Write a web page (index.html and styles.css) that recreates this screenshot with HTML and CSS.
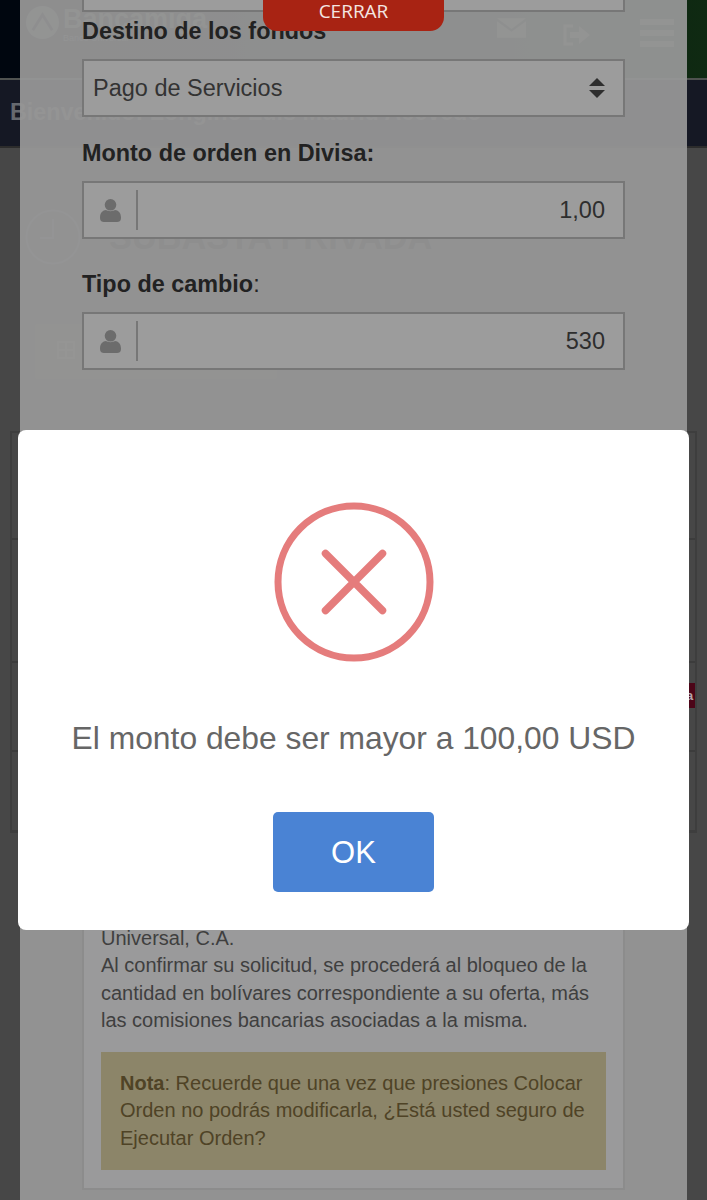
FILE: index.html
```html
<!DOCTYPE html>
<html lang="es">
<head>
<meta charset="utf-8">
<title>Subasta Privada</title>
<link rel="stylesheet" href="styles.css">
</head>
<body>
<div class="screen">
  <div class="page">
    <header class="topbar">
      <div class="brand">
        <svg class="brand-mark" viewBox="0 0 36 36"><circle cx="18" cy="18" r="17" fill="currentColor"/><path d="M8 26 L18 10 L28 26" fill="none" stroke="#0a0f18" stroke-width="3"/></svg>
        <div class="brand-text">
          <span class="brand-name">Bancamiga</span>
          <span class="brand-sub">Banco Universal</span>
        </div>
      </div>
      <div class="top-icons">
        <svg class="ti-mail" viewBox="0 0 30 20"><path d="M0 0H30L15 11Z M0 3V20H30V3L15 14Z" fill="currentColor"/></svg>
        <svg class="ti-exit" viewBox="0 0 28 22"><path d="M11 2H3V20H11" fill="none" stroke="currentColor" stroke-width="3"/><path d="M8 8H17V2L28 11L17 20V14H8Z" fill="currentColor"/></svg>
        <div class="ti-menu"><i></i><i></i><i></i></div>
      </div>
    </header>
    <div class="greet">Bienvenido: Longino Luis Madrid Acevedo</div>
    <main class="content">
      <div class="title-row">
        <svg class="clock" viewBox="0 0 56 56"><circle cx="28" cy="28" r="26.5" fill="none" stroke="currentColor" stroke-width="2"/><path d="M28 10V29H15" fill="none" stroke="currentColor" stroke-width="2"/></svg>
        <h1 class="title">SUBASTA PRIVADA</h1>
      </div>
      <div class="ghost-btn"><svg class="ghost-ico" viewBox="0 0 18 18"><path d="M1 1H17V17H1Z M1 9H17 M9 1V17" fill="none" stroke="currentColor" stroke-width="2"/></svg></div>
      <div class="table">
        <div class="row row-a"></div>
        <div class="row row-b"></div>
        <div class="row row-c"><span class="badge">a</span></div>
        <div class="row row-d"></div>
      </div>
    </main>
  </div>

  <section class="panel">
    <div class="box box-first"></div>
    <div class="label label-first">Destino de los fondos</div>
    <div class="box select">
      <span>Pago de Servicios</span>
      <svg class="updown" viewBox="0 0 16 20"><path d="M8 0L16 8H0Z M8 20L0 12H16Z" fill="currentColor"/></svg>
    </div>
    <div class="label label-second">Monto de orden en Divisa:</div>
    <div class="box field">
      <span class="addon"><svg class="person" viewBox="0 0 21 23"><circle cx="10.5" cy="5.8" r="5.8" fill="currentColor"/><path d="M0 19C0 13 3 11.5 6 11C8 12.5 13 12.5 15 11C18 11.5 21 13 21 19C21 22 19 23 17 23H4C2 23 0 22 0 19Z" fill="currentColor"/></svg></span>
      <span class="value">1,00</span>
    </div>
    <div class="label label-third"><b>Tipo de cambio</b>:</div>
    <div class="box field">
      <span class="addon"><svg class="person" viewBox="0 0 21 23"><circle cx="10.5" cy="5.8" r="5.8" fill="currentColor"/><path d="M0 19C0 13 3 11.5 6 11C8 12.5 13 12.5 15 11C18 11.5 21 13 21 19C21 22 19 23 17 23H4C2 23 0 22 0 19Z" fill="currentColor"/></svg></span>
      <span class="value">530</span>
    </div>
    <div class="terms">
      <p class="terms-text">Universal, C.A.<br>Al confirmar su solicitud, se procederá al bloqueo de la cantidad en bolívares correspondiente a su oferta, más las comisiones bancarias asociadas a la misma.</p>
      <p class="note"><b>Nota</b>: Recuerde que una vez que presiones Colocar Orden no podrás modificarla, ¿Está usted seguro de Ejecutar Orden?</p>
    </div>
  </section>

  <button class="close-tab">CERRAR</button>

  <div class="alert-layer">
    <div class="alert">
      <svg class="alert-icon" viewBox="0 0 160 160"><circle cx="80" cy="80" r="76" fill="none" stroke="#e57c7c" stroke-width="7"/><path d="M51.5 51.5L108.500 108.500M108.500 51.500L51.500 108.500" fill="none" stroke="#e57c7c" stroke-width="7.500" stroke-linecap="round"/></svg>
      <p class="alert-text">El monto debe ser mayor a 100,00 USD</p>
      <button class="ok">OK</button>
    </div>
  </div>
</div>
</body>
</html>
```
FILE: styles.css
```css
* { box-sizing: border-box; }
html, body { margin: 0; padding: 0; }
body { font-family: "Liberation Sans", Arial, sans-serif; }

.screen {
  position: relative;
  width: 707px;
  height: 1200px;
  overflow: hidden;
  background: #474747;
}

/* Page behind the dialogs */
.page { display: flex; flex-direction: column; height: 100%; }
.topbar {
  height: 80px;
  display: flex;
  align-items: flex-start;
  justify-content: space-between;
  padding: 5px 33px 0 25px;
  background: linear-gradient(90deg, #00060f 0%, #00060f 10%, #0f2a12 100%);
  border-bottom: 2px solid #4f5250;
  color: #5c625f;
}
.brand { display: flex; gap: 3px; }
.brand-mark { width: 35px; height: 35px; }
.brand-text { display: flex; flex-direction: column; }
.brand-name { font-size: 27px; line-height: 28px; font-weight: 700; }
.brand-sub { font-size: 9px; line-height: 10px; }
.top-icons { display: flex; align-items: flex-start; }
.ti-mail { width: 29px; height: 20px; margin-top: 13px; }
.ti-exit { width: 28px; height: 22px; margin: 19px 0 0 36px; }
.ti-menu { display: flex; flex-direction: column; gap: 5px; width: 34px; margin: 14px 0 0 50px; }
.ti-menu i { display: block; height: 6px; background: currentColor; }

.greet {
  height: 68px;
  padding: 0 10px;
  background: #151824;
  border-bottom: 2px solid #2c2c2c;
  color: #66696f;
  font-size: 23.300px;
  font-weight: 700;
  line-height: 64px;
  white-space: nowrap;
}
.content { flex: 1; padding: 60px 10px 0; }
.title-row { display: flex; align-items: center; gap: 28px; padding-left: 15px; height: 58px; }
.clock { width: 56px; height: 56px; color: #626870; }
.title { margin: 0; font-size: 34.300px; font-weight: 700; color: #000; padding-top: 0; }
.ghost-btn {
  width: 242px;
  height: 55px;
  margin: 58px 0 0 25px;
  padding: 17px 22px;
  border-radius: 3px;
  background: #5f5e4f;
  color: #7a7866;
}
.ghost-ico { display: block; width: 18px; height: 18px; }
.table { margin-top: 52px; border: 2px solid #3e3e3e; border-bottom-width: 3px; height: 402px; }
.row { border-bottom: 2px solid #3c3c3c; }
.row-a { height: 107px; }
.row-b { height: 123px; }
.row-c { height: 89px; padding-top: 20px; display: flex; justify-content: flex-end; }
.row-d { height: 80px; border-bottom: 0; }
.badge {
  width: 9px;
  height: 25px;
  background: #4c0518;
  color: #b5a5a8;
  font-size: 13px;
  font-weight: 700;
  line-height: 25px;
  overflow: hidden;
}

/* Form dialog */
.panel {
  position: absolute;
  top: 0;
  left: 20px;
  width: 667px;
  height: 1200px;
  padding: 0 62px;
  background: rgba(151, 151, 151, 0.94);
  color: #2a2a2a;
}
.box {
  width: 543px;
  height: 58px;
  border: 2px solid #777;
  background: #9c9c9c;
}
.box-first { margin-top: -46px; }
.label { font-size: 23.400px; line-height: 26px; font-weight: 700; color: #222; margin-bottom: 15px; }
.label b { font-weight: 700; }
.label-first { margin-top: 6px; }
.label-second { margin-top: 23px; }
.label-third { margin-top: 32px; font-weight: 400; }
.select {
  display: flex;
  align-items: center;
  justify-content: space-between;
  padding: 0 18px 0 9px;
  font-size: 23.500px;
  color: #333;
}
.updown { width: 16px; height: 20px; color: #2e2e2e; }
.field { display: flex; align-items: center; justify-content: space-between; padding-right: 18px; }
.addon {
  display: flex;
  align-items: center;
  width: 54px;
  height: 40px;
  padding-left: 16px;
  border-right: 2px solid #777;
  color: #6c6c6c;
}
.person { width: 21px; height: 23px; }
.value { font-size: 23.500px; color: #2e2e2e; }

.terms {
  margin-top: 535px;
  width: 543px;
  height: 285px;
  padding: 20px 17px 17px;
  border: 2px solid #8c8c8c;
  border-top: 0;
  background: #9a9a9b;
  color: #3f3f3f;
  font-size: 20px;
  line-height: 27.300px;
}
.terms-text { margin: 0 0 18px; }
.note {
  margin: 0;
  padding: 18px 10px 18px 19px;
  background: #8c8569;
  color: #4f4326;
}

/* Close tab */
.close-tab {
  position: absolute;
  top: 0;
  left: 263px;
  width: 181px;
  height: 31px;
  padding: 0 0 9px;
  border: 0;
  border-radius: 0 0 14px 14px;
  background: #a82313;
  color: #f4e6e2;
  font-family: "Open Sans", sans-serif;
  font-size: 19px;
  line-height: 22px;
}

/* Alert */
.alert-layer {
  position: absolute;
  inset: 0;
  display: flex;
  justify-content: center;
  align-items: flex-start;
  padding-top: 430px;
}
.alert {
  width: 671px;
  height: 500px;
  padding-top: 72px;
  display: flex;
  flex-direction: column;
  align-items: center;
  border-radius: 8px;
  background: #fff;
}
.alert-icon { width: 160px; height: 160px; }
.alert-text {
  margin: 55px 0 0;
  font-size: 31.800px;
  line-height: 42px;
  color: #666;
  white-space: nowrap;
}
.ok {
  width: 161px;
  height: 80px;
  margin-top: 53px;
  border: 0;
  border-radius: 5px;
  background: #4a83d4;
  color: #fff;
  font-family: "Liberation Sans", Arial, sans-serif;
  font-size: 31px;
  font-weight: 400;
  padding-top: 2px;
}
```
